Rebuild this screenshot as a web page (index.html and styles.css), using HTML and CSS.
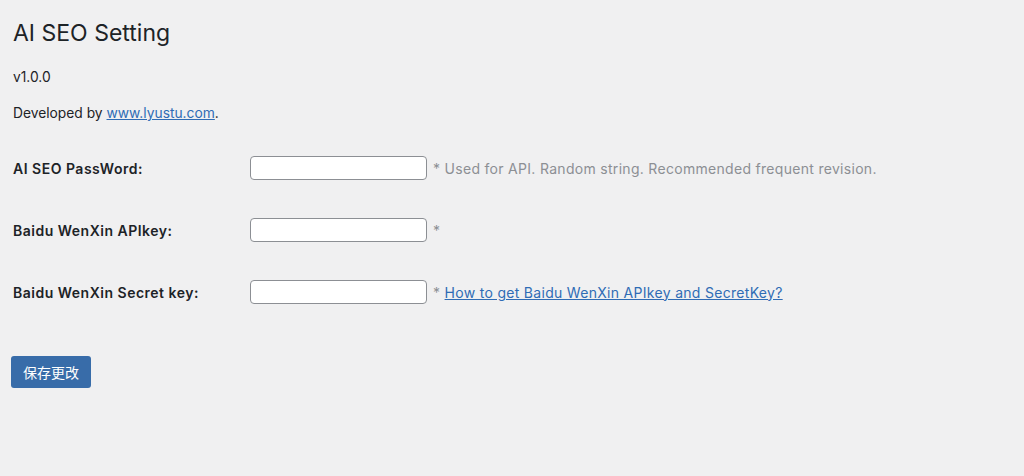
FILE: index.html
```html
<html>
    <head>
        <meta charset="utf-8">
        <link rel="stylesheet" href="styles.css">
        <title>AI SEO Setting</title>
    </head>
    <body>
        <div class="wrap">
            <h1>AI SEO Setting</h1>
            <p>v1.0.0</p>
            <p>Developed by <a href="#">www.lyustu.com</a>.</p>
            <form class="settings">
                <div class="form-row">
                    <label class="form-label" for="ai_seo_password">AI SEO PassWord:</label>
                    <input class="text-input" type="text" id="ai_seo_password">
                    <span class="description">* Used for API. Random string. Recommended frequent revision.</span>
                </div>
                <div class="form-row">
                    <label class="form-label" for="wenxin_apikey">Baidu WenXin APIkey:</label>
                    <input class="text-input" type="text" id="wenxin_apikey">
                    <span class="description">*</span>
                </div>
                <div class="form-row">
                    <label class="form-label" for="wenxin_secret">Baidu WenXin Secret key:</label>
                    <input class="text-input" type="text" id="wenxin_secret">
                    <span class="description">* <a href="#">How to get Baidu WenXin APIkey and SecretKey?</a></span>
                </div>
                <div class="submit">
                    <button type="button" class="button-primary">保存更改</button>
                </div>
            </form>
        </div>
    </body>
</html>
```

FILE: styles.css
```css
body          {margin: 0;
               background-color: #f0f0f1;
               color: #1d2327;
               font-family: Inter, "Noto Sans CJK SC", sans-serif;
               font-size: 14px;
               letter-spacing: 0.3px;}
.wrap         {padding: 18px 13px 0 13px;}
h1            {margin: 0;
               font-size: 23px;
               font-weight: 400;
               line-height: 30px;
               letter-spacing: 0;}
p             {margin: 16px 0 0 0;
               font-size: 13.8px;
               line-height: 20px;
               letter-spacing: 0;}
.wrap h1 + p  {margin-top: 19px;}
a             {color: #2f6cb5;
               text-decoration: underline;}
.settings     {margin-top: 14px;}
.form-row     {display: flex;
               align-items: center;
               height: 62px;}
.form-label   {width: 237px;
               font-weight: 600;
               letter-spacing: 0.5px;}
.text-input   {width: 177px;
               height: 24px;
               margin: 0;
               padding: 0 8px;
               box-sizing: border-box;
               border: 1px solid #8c8f94;
               border-radius: 4px;
               background-color: white;}
.description  {margin-left: 6px;
               color: #8c8f94;}
.submit       {margin-top: 33px;
               margin-left: -2px;}
.button-primary {height: 32px;
                 padding: 0 12px;
                 border: none;
                 border-radius: 3px;
                 background-color: #386ca9;
                 color: white;
                 font-family: "Noto Sans CJK SC", sans-serif;
                 font-size: 14px;
                 letter-spacing: 0;}
```
